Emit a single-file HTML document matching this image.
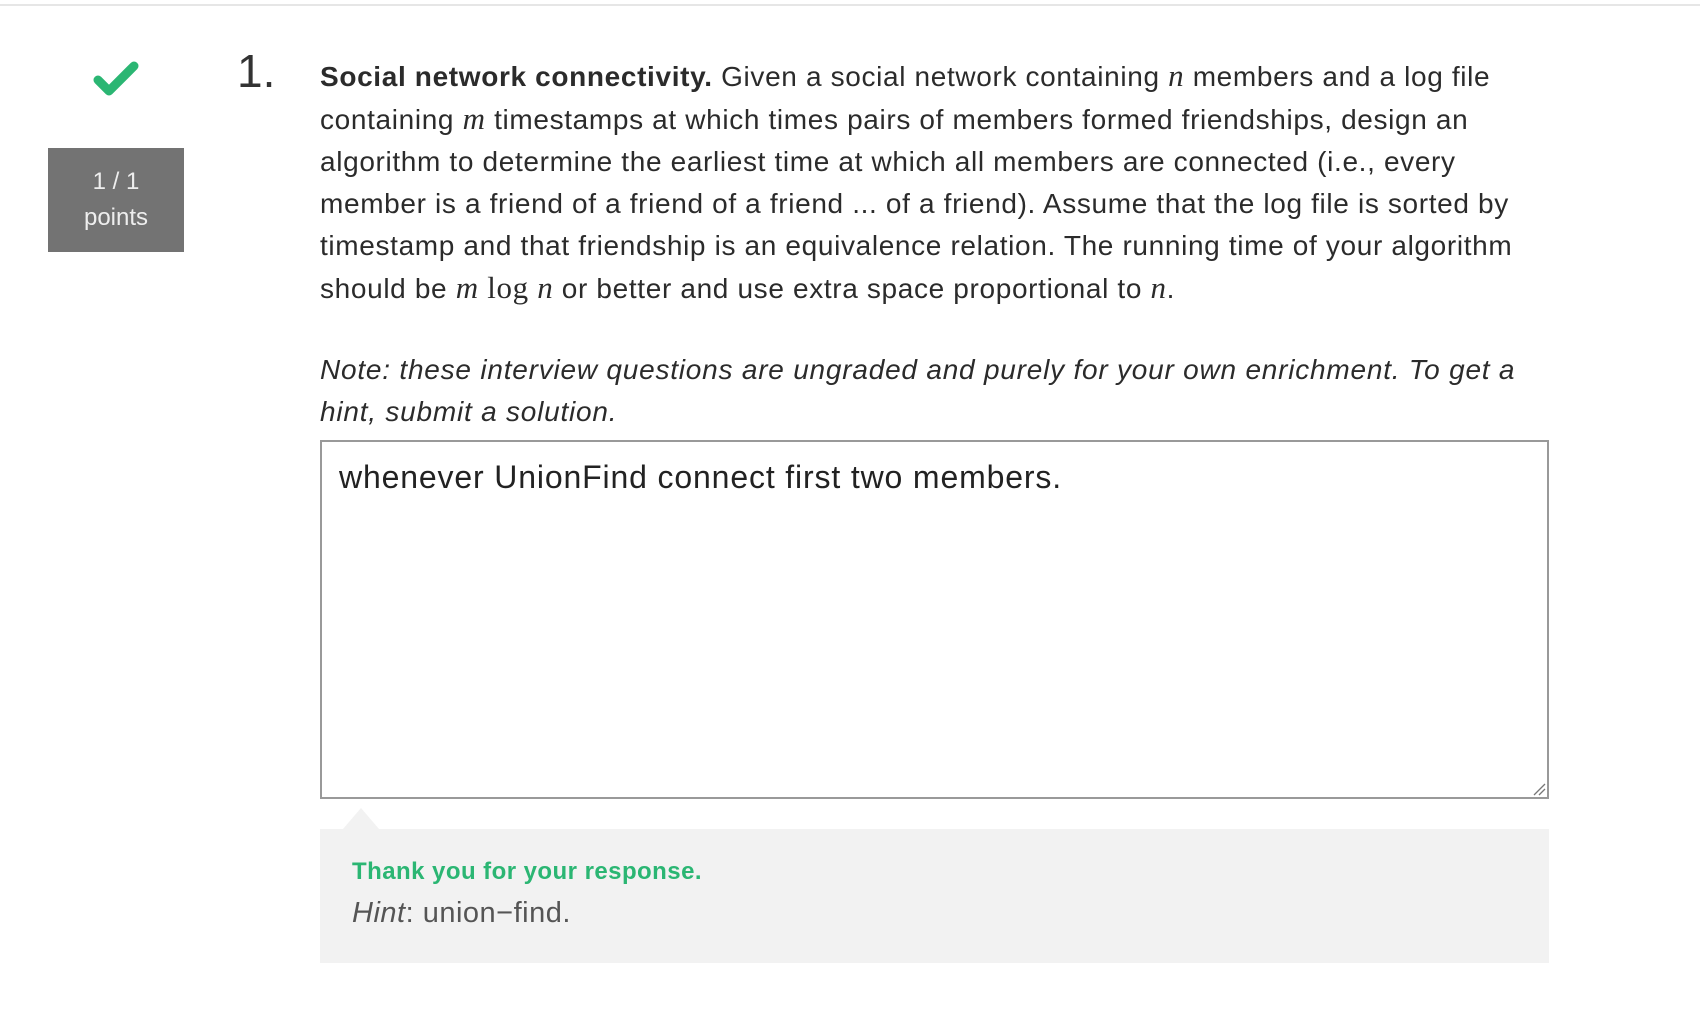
<!DOCTYPE html>
<html><head><meta charset="utf-8"><style>
body{margin:0;width:1700px;height:1030px;background:#fff;position:relative;overflow:hidden;font-family:"Liberation Sans",sans-serif;color:#2b2b2b}
.topline{position:absolute;left:0;top:4px;width:1700px;height:2px;background:#e6e6e6}
.pts{position:absolute;left:48px;top:148px;width:136px;height:104px;background:#737373;color:#eee;font-size:24px;text-align:center;line-height:36px;padding-top:16px;box-sizing:border-box}
.num{position:absolute;left:237px;top:44px;font-size:46px;color:#333}
.q{position:absolute;left:320px;top:55px;width:1300px;font-size:28px;letter-spacing:0.65px;line-height:42px;white-space:nowrap}
.m{font-family:"Liberation Serif",serif;font-style:italic;font-size:31px}
.lg{font-family:"Liberation Serif",serif;font-size:31px}
.note{position:absolute;left:320px;top:349px;font-size:28px;letter-spacing:0.78px;line-height:42px;font-style:italic;white-space:nowrap}
.ta{position:absolute;left:320px;top:440px;width:1229px;height:359px;border:2px solid #999;box-sizing:border-box;font-size:32px;letter-spacing:0.85px;padding:17px 0 0 17px;color:#222}
.fb{position:absolute;left:320px;top:829px;width:1229px;height:134px;background:#f2f2f2}
.tri{position:absolute;left:343px;top:808px;width:0;height:0;border-left:18px solid transparent;border-right:18px solid transparent;border-bottom:21px solid #f2f2f2}
.ty{position:absolute;left:352px;top:858px;font-size:24px;letter-spacing:0.45px;font-weight:bold;color:#2bb673}
.hint{position:absolute;left:352px;top:897px;font-size:29px;letter-spacing:0.5px;color:#555}
</style></head><body>
<div class="topline"></div>
<svg style="position:absolute;left:92px;top:60px" width="48" height="38" viewBox="0 0 48 38"><path d="M6 20 L17 31 L42 6" fill="none" stroke="#2bb673" stroke-width="9" stroke-linecap="round" stroke-linejoin="round"/></svg>
<div class="pts">1 / 1<br>points</div>
<div class="num">1.</div>
<div class="q"><b>Social network connectivity.</b> Given a social network containing <span class="m">n</span> members and a log file<br>containing <span class="m">m</span> timestamps at which times pairs of members formed friendships, design an<br>algorithm to determine the earliest time at which all members are connected (i.e., every<br>member is a friend of a friend of a friend ... of a friend). Assume that the log file is sorted by<br>timestamp and that friendship is an equivalence relation. The running time of your algorithm<br>should be <span class="m">m</span> <span class="lg">log</span> <span class="m">n</span> or better and use extra space proportional to <span class="m">n</span>.</div>
<div class="note">Note: these interview questions are ungraded and purely for your own enrichment. To get a<br>hint, submit a solution.</div>
<div class="ta">whenever UnionFind connect first two members.</div>
<svg style="position:absolute;left:1532px;top:782px" width="14" height="14"><path d="M2 13 L13 2 M7 13 L13 7" stroke="#777" stroke-width="1.3"/></svg>
<div class="tri"></div>
<div class="fb"></div>
<div class="ty">Thank you for your response.</div>
<div class="hint"><i>Hint</i>: union−find.</div>
</body></html>
